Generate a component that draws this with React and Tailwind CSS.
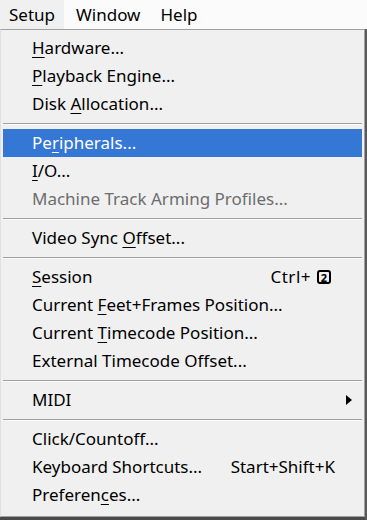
const items = [
  { label: 'Hardware...', key: 0 },
  { label: 'Playback Engine...', key: 0 },
  { label: 'Disk Allocation...', key: 5 },
  { sep: true },
  { label: 'Peripherals...', key: 2, active: true },
  { label: 'I/O...', key: 0 },
  { label: 'Machine Track Arming Profiles...', disabled: true },
  { sep: true },
  { label: 'Video Sync Offset...', key: 11 },
  { sep: true },
  { label: 'Session', key: 0, shortcut: 'ctrl2' },
  { label: 'Current Feet+Frames Position...', key: 8 },
  { label: 'Current Timecode Position...', key: 8 },
  { label: 'External Timecode Offset...' },
  { sep: true },
  { label: 'MIDI', submenu: true },
  { sep: true },
  { label: 'Click/Countoff...' },
  { label: 'Keyboard Shortcuts...', shortcut: 'Start+Shift+K' },
  { label: 'Preferences...', key: 8 },
]

function Label({ text, index }) {
  if (index === undefined) return <span>{text}</span>
  return (
    <span>
      {text.slice(0, index)}
      <span className="underline underline-offset-[3px] decoration-1">{text[index]}</span>
      {text.slice(index + 1)}
    </span>
  )
}

function Shortcut({ value }) {
  if (value === 'ctrl2') {
    return (
      <span className="mr-[4px] flex items-center gap-[6px]">
        <span className="tracking-[0.5px]">Ctrl+</span>
        <span className="inline-flex h-[14px] w-[14px] items-center justify-center rounded-[3px] border-2 border-black text-[11px] font-bold leading-none">
          2
        </span>
      </span>
    )
  }
  return <span>{value}</span>
}

export default function App() {
  return (
    <div
      className="flex h-[520px] w-[367px] flex-col overflow-hidden bg-[#4a4a4a] text-[17px] text-black"
      style={{ fontFamily: '"Noto Sans", "Open Sans", sans-serif' }}
    >
      <div className="flex h-[29px] shrink-0 items-center bg-[#fbfbfb]">
        <div className="flex h-full w-[64px] items-center bg-[#f0f0f0] pl-[9px]">Setup</div>
        <div className="pl-[12px]">Window</div>
        <div className="pl-[20px]">Help</div>
      </div>
      <div className="flex min-h-0 flex-1">
        <div className="flex h-[488px] w-[365px] flex-col border border-l-[#e0e0e0] border-[#a0a0a0] bg-[#f0f0f0] px-[2px] pt-[4px]">
          {items.map((item, i) =>
            item.sep ? (
              <div key={i} className="flex h-[11px] shrink-0 flex-col justify-center">
                <div className="h-px bg-[#a0a0a0]" />
                <div className="h-px bg-[#fafafa]" />
              </div>
            ) : (
              <div
                key={i}
                className={`flex h-[28px] shrink-0 items-center justify-between pl-[29px] pr-[27px] ${
                  item.active ? 'bg-[#3477d4] text-white' : ''
                } ${item.disabled ? 'text-[#6d6d6d]' : ''}`}
              >
                <Label text={item.label} index={item.key} />
                {item.shortcut && <Shortcut value={item.shortcut} />}
                {item.submenu && (
                  <svg viewBox="0 0 6 10" className="mr-[-17px] h-[10px] w-[6px]" aria-hidden="true">
                    <path d="M0 0 6 5 0 10Z" fill="black" />
                  </svg>
                )}
              </div>
            )
          )}
        </div>
        <div className="flex-1 bg-[#5a5a5a]" />
      </div>
    </div>
  )
}
